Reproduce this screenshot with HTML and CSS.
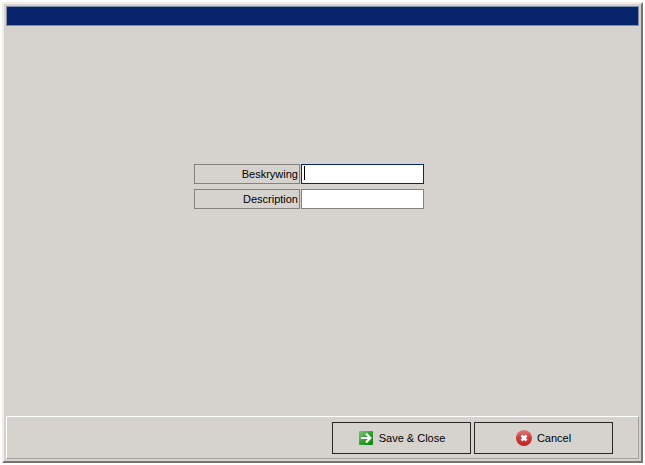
FILE: index.html
```
<!DOCTYPE html>
<html lang="af">
<head>
    <meta charset="UTF-8">
    <meta name="viewport" content="width=device-width, initial-scale=1.0">
    <title>Beskrywing</title>
    <link rel="stylesheet" href="styles.css">
</head>
<body>
    <form class="window">
        <div class="titlebar"></div>

        <div class="content">
            <div class="fields">
                <label for="beskrywing">Beskrywing</label>
                <input type="text" id="beskrywing" placeholder=" " autocomplete="off" autofocus>
                <label for="description">Description</label>
                <input type="text" id="description" placeholder=" " autocomplete="off">
            </div>
        </div>

        <div class="toolbar">
            <button type="submit">
                <svg width="16" height="16" viewBox="0 0 16 16" aria-hidden="true">
                    <defs>
                        <linearGradient id="green" x1="0" y1="0" x2="1" y2="1">
                            <stop offset="0" stop-color="#7cc97c"/>
                            <stop offset="0.5" stop-color="#2fa02f"/>
                            <stop offset="1" stop-color="#0c850c"/>
                        </linearGradient>
                    </defs>
                    <rect x="1" y="1" width="14" height="14" rx="1" fill="url(#green)"/>
                    <path d="M3 8h9M8 3.5L12.3 8L8 12.5" fill="none" stroke="#fff" stroke-width="2.2"/>
                </svg>
                Save &amp; Close
            </button>
            <button type="button">
                <svg width="16" height="16" viewBox="0 0 16 16" aria-hidden="true">
                    <defs>
                        <linearGradient id="red" x1="0" y1="0" x2="0" y2="1">
                            <stop offset="0" stop-color="#e08080"/>
                            <stop offset="0.5" stop-color="#cc3b3b"/>
                            <stop offset="1" stop-color="#bd2424"/>
                        </linearGradient>
                    </defs>
                    <circle cx="8" cy="8" r="8" fill="url(#red)"/>
                    <path d="M5.5 5.5l5 5M10.5 5.5l-5 5" stroke="#fff" stroke-width="2.6"/>
                </svg>
                Cancel
            </button>
        </div>
    </form>
</body>
</html>
```
FILE: styles.css
```
* {
    box-sizing: border-box;
}
body {
    margin: 0;
    padding: 2px;
    height: 100vh;
    background-color: #fff;
    font-family: "Liberation Sans", Arial, sans-serif;
    font-size: 11px;
    color: #000;
}
.window {
    display: flex;
    flex-direction: column;
    height: 100%;
    padding: 2px;
    background-color: #d6d3ce;
    border: 2px solid;
    border-color: #efeeeb #77756f #77756f #efeeeb;
}
.titlebar {
    height: 20px;
    background-color: #08246b;
    border: 1px solid #848ea8;
}
.content {
    flex: 1;
    display: flex;
    align-items: center;
    justify-content: center;
    padding: 0 27px 70px 0;
}
.fields {
    display: grid;
    grid-template-columns: 106px 123px;
    gap: 5px 1px;
}
.fields label {
    height: 20px;
    padding-right: 1px;
    border: 1px solid #84827f;
    line-height: 18px;
    text-align: right;
}
.fields input {
    width: 100%;
    height: 20px;
    margin: 0;
    padding: 0 1px;
    border: 1px solid #84827f;
    border-radius: 0;
    background-color: #fff;
    font: inherit;
    outline: none;
}
.fields input:focus {
    border-color: #08246b;
}
/* steady caret while the field is still empty */
.fields input:focus:placeholder-shown {
    caret-color: transparent;
    background: linear-gradient(#000, #000) 2px 1px / 1px 14px no-repeat #fff;
}
.toolbar {
    display: flex;
    justify-content: flex-end;
    gap: 3px;
    padding: 5px 25px 4px 0;
    border: 1px solid;
    border-color: #fff #a5a29c #a5a29c #fff;
}
button {
    display: flex;
    align-items: center;
    justify-content: center;
    gap: 5px;
    width: 139px;
    height: 32px;
    padding: 0;
    border: 1px solid #292824;
    background-color: #d6d3ce;
    font: inherit;
    color: #000;
}
```
